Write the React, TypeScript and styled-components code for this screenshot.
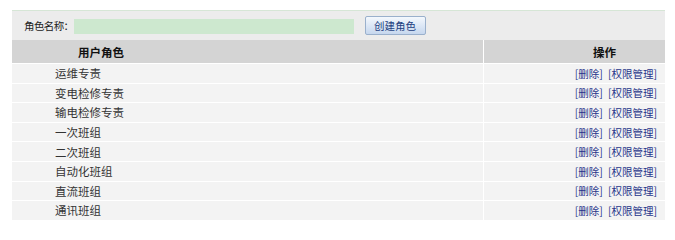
import React, { useState } from 'react';
import styled, { createGlobalStyle } from 'styled-components';

const GlobalStyle = createGlobalStyle`
  body {
    margin: 0;
    background: #ffffff;
    font-family: "Noto Sans CJK SC", "Liberation Sans", sans-serif;
    color: #222;
  }
`;

const Page = styled.div`
  width: 653px;
  margin: 10px 0 0 12px;
  border-top: 1px solid #d6e6d6;
`;

const Toolbar = styled.div`
  display: flex;
  align-items: center;
  height: 29px;
  padding-left: 12px;
  background: #ececec;
`;

const Label = styled.span`
  font-size: 10.5px;
  color: #222;
  letter-spacing: -0.6px;
`;

const NameInput = styled.input`
  width: 280px;
  height: 15px;
  margin: 1px 0 0 0;
  padding: 0 4px;
  border: none;
  outline: none;
  background: #cde8cf;
  font-size: 11px;
  font-family: inherit;
  box-sizing: border-box;
`;

const Button = styled.button`
  width: 61px;
  height: 19px;
  margin: -1px 0 0 11px;
  padding: 0;
  border: 1px solid #9ab0cc;
  border-radius: 2px;
  background: linear-gradient(#f4f8fd, #c6d7ee);
  color: #223f80;
  font-size: 10.5px;
  font-family: inherit;
  line-height: 17px;
  cursor: pointer;
`;

const Table = styled.table`
  width: 100%;
  border-collapse: collapse;
  table-layout: fixed;
`;

const HeadCell = styled.th<{ $right?: boolean }>`
  height: 23px;
  padding: 0 ${(p) => (p.$right ? '49px' : '0')} 0 ${(p) => (p.$right ? '0' : '66px')};
  background: #d4d4d4;
  border-bottom: 1px solid #ffffff;
  border-left: ${(p) => (p.$right ? '1px solid #ffffff' : 'none')};
  text-align: ${(p) => (p.$right ? 'right' : 'left')};
  font-size: 11.5px;
  line-height: 16px;
  font-weight: bold;
  color: #111;
`;

const Cell = styled.td<{ $right?: boolean }>`
  height: 18.6px;
  padding: 0 ${(p) => (p.$right ? '8px' : '0')} 0 ${(p) => (p.$right ? '0' : '43px')};
  background: #f3f3f3;
  border-bottom: 1px solid #ffffff;
  border-left: ${(p) => (p.$right ? '1px solid #ffffff' : 'none')};
  text-align: ${(p) => (p.$right ? 'right' : 'left')};
  font-size: 11.5px;
  line-height: 16px;
  color: #333;
  white-space: nowrap;
`;

const Link = styled.a`
  color: #27358a;
  font-size: 10.5px;
  text-decoration: none;
  cursor: pointer;
  & + & {
    margin-left: 5px;
  }
`;

const roles = ['运维专责', '变电检修专责', '输电检修专责', '一次班组', '二次班组', '自动化班组', '直流班组', '通讯班组'];

const App: React.FC = () => {
  const [name, setName] = useState('');

  return (
    <>
      <GlobalStyle />
      <Page>
        <Toolbar>
          <Label>角色名称：</Label>
          <NameInput value={name} onChange={(e) => setName(e.target.value)} />
          <Button type="button">创建角色</Button>
        </Toolbar>
        <Table>
          <colgroup>
            <col style={{ width: 471 }} />
            <col />
          </colgroup>
          <thead>
            <tr>
              <HeadCell>用户角色</HeadCell>
              <HeadCell $right>操作</HeadCell>
            </tr>
          </thead>
          <tbody>
            {roles.map((r) => (
              <tr key={r}>
                <Cell>{r}</Cell>
                <Cell $right>
                  <Link>[删除]</Link>
                  <Link>[权限管理]</Link>
                </Cell>
              </tr>
            ))}
          </tbody>
        </Table>
      </Page>
    </>
  );
};

export default App;
